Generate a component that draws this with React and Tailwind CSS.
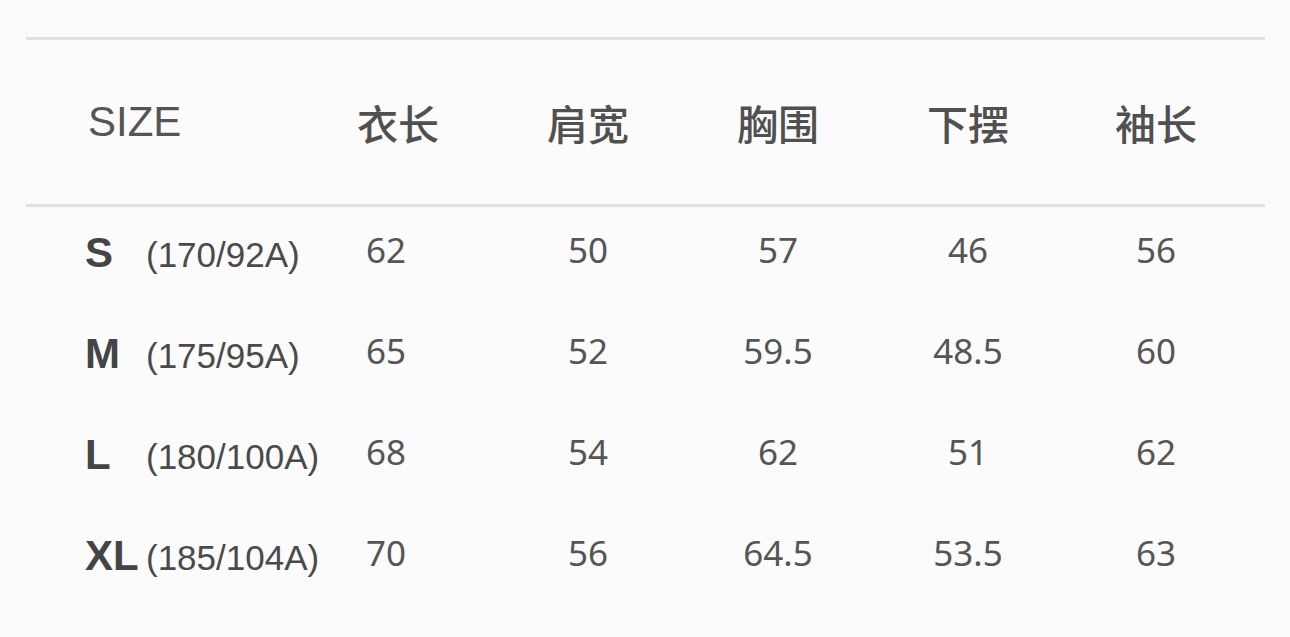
import React from 'react';

const headers = ['衣长', '肩宽', '胸围', '下摆', '袖长'];

const rows = [
  { size: 'S', spec: '(170/92A)', values: ['62', '50', '57', '46', '56'] },
  { size: 'M', spec: '(175/95A)', values: ['65', '52', '59.5', '48.5', '60'] },
  { size: 'L', spec: '(180/100A)', values: ['68', '54', '62', '51', '62'] },
  { size: 'XL', spec: '(185/104A)', values: ['70', '56', '64.5', '53.5', '63'] },
];

const gridCols = 'grid grid-cols-[277px_190px_190px_190px_190px_186px]';

function App() {
  return (
    <div className="w-full h-[637px] bg-[#fbfbfb] overflow-hidden">
      <div className="ml-[26px] w-[1239px] pt-[37px]">
        <div className="h-[3px] bg-[#e1e1e1]" />

        {/* header */}
        <div className={`${gridCols} h-[164px] items-center`}>
          <div
            className="pl-[62px] text-[42px] leading-none text-[#555] whitespace-nowrap"
            style={{ fontFamily: '"Liberation Sans", Arial, sans-serif' }}
          >
            SIZE
          </div>
          {headers.map((h) => (
            <div
              key={h}
              className="text-center text-[41px] leading-none font-medium text-[#505050]"
              style={{ fontFamily: '"Noto Sans CJK SC", "Noto Sans", sans-serif' }}
            >
              {h}
            </div>
          ))}
        </div>

        <div className="h-[3px] bg-[#e1e1e1]" />

        {/* body */}
        <div>
          {rows.map((r) => (
            <div key={r.size} className={`${gridCols} h-[101px] items-start pt-[25px]`}>
              <div
                className="pl-[59px] flex items-baseline whitespace-nowrap"
                style={{ fontFamily: '"Liberation Sans", Arial, sans-serif' }}
              >
                <span className="w-[61px] shrink-0 text-[42px] leading-none font-bold text-[#444]">
                  {r.size}
                </span>
                <span className="text-[35px] leading-none text-[#4a4a4a]">{r.spec}</span>
              </div>
              {r.values.map((v, i) => (
                <div
                  key={i}
                  className={`text-center text-[35px] leading-none text-[#555] ${i === 0 ? 'pr-[24px]' : ''}`}
                  style={{ fontFamily: '"Noto Sans", "Open Sans", sans-serif' }}
                >
                  {v}
                </div>
              ))}
            </div>
          ))}
        </div>
      </div>
    </div>
  );
}

export default App;
